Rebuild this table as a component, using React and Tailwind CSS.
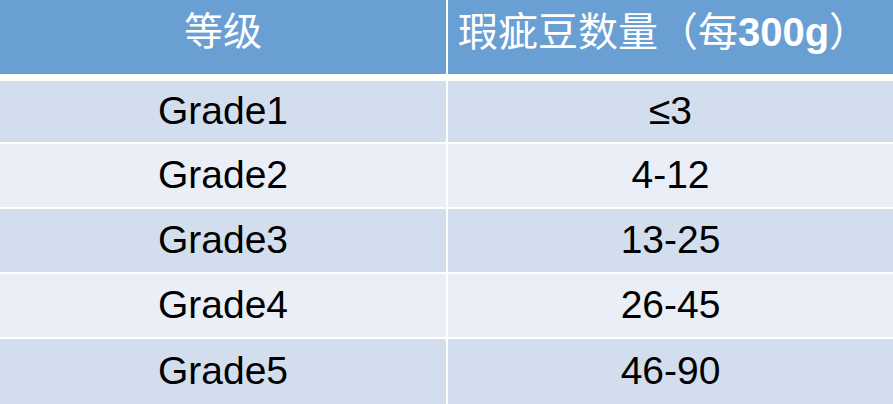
export default function App() {
  const rows = [
    ["Grade1", "≤3", "h-[61px]", "bg-[#d2deed]"],
    ["Grade2", "4-12", "h-[63px]", "bg-[#e9eef7]"],
    ["Grade3", "13-25", "h-[63px]", "bg-[#d2deed]"],
    ["Grade4", "26-45", "h-[63px]", "bg-[#e9eef7]"],
    ["Grade5", "46-90", "h-[65px]", "bg-[#d2deed]"],
  ];
  return (
    <div
      className="w-[893px] h-[404px] bg-white flex flex-col overflow-hidden"
      style={{ fontFamily: '"Liberation Sans", "Noto Sans CJK SC", sans-serif' }}
    >
      <div className="grid grid-cols-[446px_1fr] gap-x-[2px] h-[74px] shrink-0">
        <div className="bg-[#6a9fd4] flex items-center justify-center text-white text-[39px] font-normal pb-[10px]">
          等级
        </div>
        <div className="bg-[#6a9fd4] flex items-center justify-center text-white text-[40px] font-normal pb-[10px] pr-[14px] whitespace-nowrap">
          瑕疵豆数量（每<span className="font-bold">300g</span>）
        </div>
      </div>
      <div className="flex flex-col gap-y-[2px] mt-[7px]">
        {rows.map(([a, b, h, bg]) => (
          <div key={a} className={`grid grid-cols-[446px_1fr] gap-x-[2px] ${h} shrink-0`}>
            <div className={`${bg} flex items-center justify-center text-black text-[39px]`}>{a}</div>
            <div className={`${bg} flex items-center justify-center text-black text-[39px]`}>{b}</div>
          </div>
        ))}
      </div>
    </div>
  );
}
